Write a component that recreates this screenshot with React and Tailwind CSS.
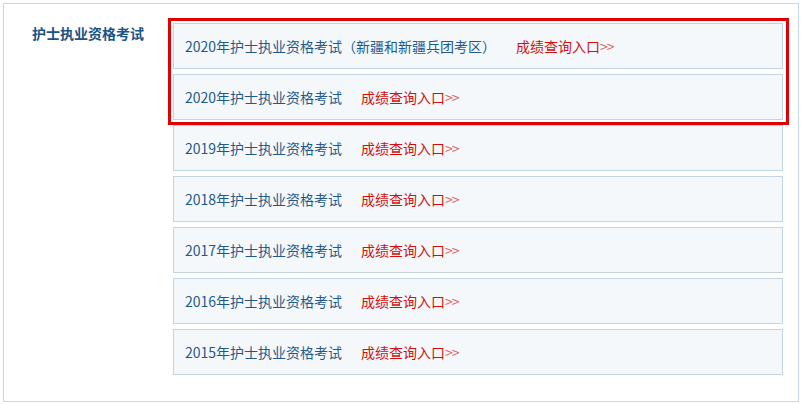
import React from 'react'

const rows = [
  { title: '2020年护士执业资格考试（新疆和新疆兵团考区）', gap: 'ml-[20px]' },
  { title: '2020年护士执业资格考试', gap: 'ml-[19px]' },
  { title: '2019年护士执业资格考试', gap: 'ml-[19px]' },
  { title: '2018年护士执业资格考试', gap: 'ml-[19px]' },
  { title: '2017年护士执业资格考试', gap: 'ml-[19px]' },
  { title: '2016年护士执业资格考试', gap: 'ml-[19px]' },
  { title: '2015年护士执业资格考试', gap: 'ml-[19px]' },
]

const Row = ({ item }) => (
  <div className='h-[46px] flex items-center pl-[11px] border border-[#c3d4e3] bg-[#f4f8fb] text-[14px] leading-none'>
    <span className='text-[#1f5a8c]'>{item.title}</span>
    <span className={`${item.gap} text-[#d10f0f]`}>成绩查询入口</span>
    <span className='text-[#e05c5c] tracking-[-1px]'>&gt;&gt;</span>
  </div>
)

export default function App() {
  return (
    <div className='w-[801px] h-[404px] bg-white pt-[3px] pl-[3px] overflow-hidden font-["Noto_Sans_CJK_SC","Noto_Sans",sans-serif]'>
      <div className='w-[796px] h-[399px] border border-[#c8d8e6] flex'>
        <div className='w-[169px] shrink-0 pl-[28px] pt-[19px]'>
          <h2 className='text-[14px] font-bold text-[#1a5486] leading-[20px]'>护士执业资格考试</h2>
        </div>
        <div className='relative w-[610px] pt-[19px]'>
          <div className='flex flex-col gap-[5px]'>
            {rows.map((r, i) => <Row key={i} item={r} />)}
          </div>
          <div className='absolute left-[-5px] top-[14px] w-[621px] h-[107px] border-[3px] border-[#e00000]'></div>
        </div>
      </div>
    </div>
  )
}
